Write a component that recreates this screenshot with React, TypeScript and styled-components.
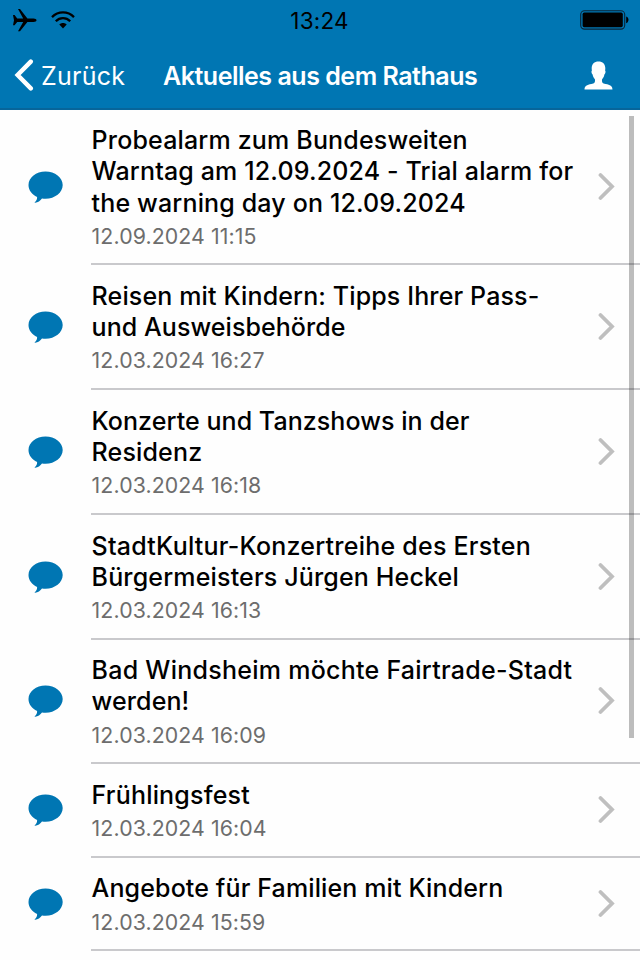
import React from "react";
import styled, { createGlobalStyle } from "styled-components";

const Global = createGlobalStyle`
  * { box-sizing: border-box; }
  body { margin: 0; background: #fff; overflow: hidden; }
`;

const Screen = styled.div`
  position: relative;
  width: 640px;
  height: 960px;
  overflow: hidden;
  background: #fefefe;
  color: #000;
  font-family: Inter, "Liberation Sans", sans-serif;
`;

const Header = styled.header`
  height: 110px;
  background: #0076b3;
  border-bottom: 2px solid #07659a;
`;

const StatusBar = styled.div`
  height: 40px;
  display: grid;
  grid-template-columns: 1fr auto 1fr;
  align-items: center;
  padding: 0 11px 0 10px;
`;

const StatusIcons = styled.div`
  display: flex;
  align-items: center;
  gap: 14px;
  padding-left: 2px;
  svg { display: block; }
`;

const Clock = styled.time`
  font-size: 22.5px;
  line-height: 28px;
  padding-top: 2px;
  letter-spacing: 0.2px;
`;

const BatteryIcon = styled.svg`
  display: block;
  justify-self: end;
`;

const NavBar = styled.nav`
  height: 70px;
  display: grid;
  grid-template-columns: 163px 1fr auto;
  align-items: center;
  padding: 1px 27px 0 0;
  color: #fff;
`;

const BackButton = styled.button`
  display: flex;
  align-items: center;
  gap: 7px;
  padding: 0 0 0 14px;
  border: 0;
  background: none;
  color: inherit;
  font: 370 25px/32px Inter, sans-serif;
  letter-spacing: 0.25px;
  svg { margin-bottom: 2px; }
  span { padding-top: 1px; }
`;

const NavTitle = styled.h1`
  margin: 0;
  padding-top: 1px;
  font-size: 25px;
  line-height: 32px;
  font-weight: 600;
  letter-spacing: -0.48px;
  white-space: nowrap;
`;

const UserButton = styled.button`
  padding: 0;
  border: 0;
  background: none;
  svg { display: block; }
`;

const List = styled.ul`
  margin: 0;
  padding: 0;
  list-style: none;
`;

const Row = styled.li<{ $height: number }>`
  display: grid;
  grid-template-columns: 91px 1fr;
  height: ${(p) => p.$height}px;
`;

const IconCell = styled.div`
  display: flex;
  align-items: center;
  padding: 0 0 2px 28px;
`;

const RowBody = styled.div`
  display: flex;
  align-items: center;
  justify-content: space-between;
  padding: 0 24px 0 0.6px;
  border-bottom: 2px solid #c9c9cc;
  svg { margin-bottom: 1px; }
`;

const RowText = styled.div`
  padding-top: 4px;
`;

const Title = styled.h2`
  margin: 0;
  font-size: 25px;
  font-weight: 470;
  line-height: 31.3px;
`;

const Line = styled.span<{ $tracking: number }>`
  display: block;
  white-space: nowrap;
  letter-spacing: ${(p) => p.$tracking}px;
`;

const Stamp = styled.time`
  display: block;
  padding-top: 1.3px;
  font-size: 21.3px;
  line-height: 32px;
  letter-spacing: 0.1px;
  color: #6d6d6d;
`;

const ScrollThumb = styled.div`
  position: absolute;
  top: 116px;
  right: 6px;
  width: 5px;
  height: 622px;
  background: rgba(0, 0, 0, 0.26);
`;

type Item = { height: number; date: string; lines: [string, number][] };

const items: Item[] = [
  {
    height: 155,
    date: "12.09.2024 11:15",
    lines: [
      ["Probealarm zum Bundesweiten", 0.17],
      ["Warntag am 12.09.2024 - Trial alarm for", 0.15],
      ["the warning day on 12.09.2024", 0.15],
    ],
  },
  { height: 125, date: "12.03.2024 16:27", lines: [["Reisen mit Kindern: Tipps Ihrer Pass-", 0.13], ["und Ausweisbehörde", 0.06]] },
  { height: 125, date: "12.03.2024 16:18", lines: [["Konzerte und Tanzshows in der", 0.06], ["Residenz", 0.15]] },
  { height: 125, date: "12.03.2024 16:13", lines: [["StadtKultur-Konzertreihe des Ersten", 0.23], ["Bürgermeisters Jürgen Heckel", 0.16]] },
  { height: 124, date: "12.03.2024 16:09", lines: [["Bad Windsheim möchte Fairtrade-Stadt", 0.26], ["werden!", 0.1]] },
  { height: 94, date: "12.03.2024 16:04", lines: [["Frühlingsfest", 0.18]] },
  { height: 93, date: "12.03.2024 15:59", lines: [["Angebote für Familien mit Kindern", 0.13]] },
];

const Bubble = () => (
  <svg width="35" height="32" viewBox="0 0 35 32" fill="#0076b3">
    <path d="M17.5 .5C27 .5 34.7 6.5 34.7 14.1S27 27.8 17.5 27.8c-1.200 0-2.400-.1-3.500-.3-1.700 2.300-4.100 4-6.800 4.300-.7 0-.7-.5-.2-.9 1.500-1.200 2.200-2.800 2.100-4.900C4 23.700.5 19.300.5 14.100.5 6.500 8.100.5 17.500.5Z" />
  </svg>
);

const Chevron = () => (
  <svg width="18" height="29" viewBox="0 0 18 29" fill="none" stroke="#bfbfbf" strokeWidth="3.8" strokeLinecap="round" strokeLinejoin="miter">
    <path d="M2.500 3 14 14.500 2.500 26" />
  </svg>
);

export default function App() {
  return (
    <Screen>
      <Global />
      <Header>
        <StatusBar>
          <StatusIcons>
            <svg width="25" height="24" viewBox="0 0 25 24">
              <path d="M1 7h1.600l2.600 3.500h6L6 1h2l7.400 9.500h6.100c1.800 0 3 .8 3 1.700s-1.200 1.700-3 1.700h-6.100L8 23.300H6l5.200-9.400h-6L2.600 17.300H1l1-5.100Z" />
            </svg>
            <svg width="24" height="18" viewBox="0 0 24 18" fill="none" stroke="#000" strokeWidth="2.3">
              <path d="M1 6.100C7.200-.2 16.800-.2 23 6.100M4.800 10.200c4-4 10.400-4 14.400 0" />
              <path d="M8.300 13.600c2-2 5.400-2 7.400 0L12 17.400Z" fill="#000" stroke="none" />
            </svg>
          </StatusIcons>
          <Clock>13:24</Clock>
          <BatteryIcon width="49" height="20" viewBox="0 0 49 20">
            <rect x=".7" y=".7" width="44" height="18.4" rx="3.8" fill="none" stroke="#0a2638" strokeWidth="1.1" />
            <rect x="2.6" y="2.6" width="40.2" height="14.6" rx="1.6" />
            <path d="M46.200 6.400c3 .8 3 6 0 6.800Z" />
          </BatteryIcon>
        </StatusBar>
        <NavBar>
          <BackButton>
            <svg width="20" height="32" viewBox="0 0 20 32" fill="none" stroke="#fff" strokeWidth="4.4" strokeLinecap="round">
              <path d="M16.800 2.600 3.600 16l13.200 13.400" />
            </svg>
            <span>Zurück</span>
          </BackButton>
          <NavTitle>Aktuelles aus dem Rathaus</NavTitle>
          <UserButton>
            <svg width="29" height="29" viewBox="0 0 29 29" fill="#fff">
              <path d="M14.500.5c4.200 0 6.800 2.600 6.800 6.600 0 1 0 1.700-.2 2.400.8.5.5 3-.7 4.100-.4 2-1.200 3.600-2.400 4.800-.2 3.300.7 3.900 3.600 4.500 4.600.8 6.900 2.100 6.900 5.600H.5c0-3.500 2.300-4.800 6.900-5.600 2.900-.6 3.800-1.200 3.600-4.500-1.200-1.200-2-2.800-2.400-4.800-1.200-1.100-1.500-3.600-.7-4.100-.2-.7-.2-1.400-.2-2.400 0-4 2.600-6.600 6.800-6.600Z" />
            </svg>
          </UserButton>
        </NavBar>
      </Header>
      <List>
        {items.map((item) => (
          <Row key={item.date} $height={item.height}>
            <IconCell>
              <Bubble />
            </IconCell>
            <RowBody>
              <RowText>
                <Title>
                  {item.lines.map(([text, tracking]) => (
                    <Line key={text} $tracking={tracking}>{text}</Line>
                  ))}
                </Title>
                <Stamp>{item.date}</Stamp>
              </RowText>
              <Chevron />
            </RowBody>
          </Row>
        ))}
      </List>
      <ScrollThumb />
    </Screen>
  );
}
